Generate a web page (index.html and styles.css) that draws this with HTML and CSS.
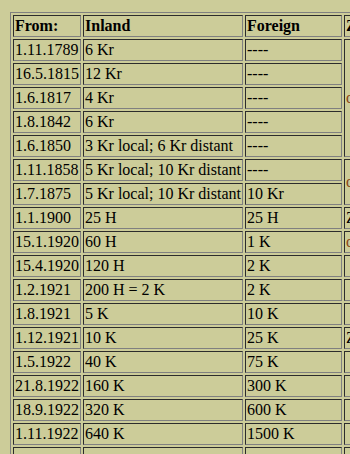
FILE: index.html
```html
<!DOCTYPE html>
<html>
<head>
<meta charset="utf-8">
<title>Letter rates</title>
<link rel="stylesheet" href="styles.css">
</head>
<body>
<table class="rates">
  <tr><th>From:</th><th>Inland</th><th class="c3">Foreign</th><th class="c4">Zone</th></tr>
  <tr><td>1.11.1789</td><td>6 Kr</td><td>----</td><td rowspan="5" class="c4"><span class="mark">o</span></td></tr>
  <tr><td>16.5.1815</td><td>12 Kr</td><td>----</td></tr>
  <tr><td>1.6.1817</td><td>4 Kr</td><td>----</td></tr>
  <tr><td>1.8.1842</td><td>6 Kr</td><td>----</td></tr>
  <tr><td>1.6.1850</td><td>3 Kr local; 6 Kr distant</td><td>----</td></tr>
  <tr><td>1.11.1858</td><td>5 Kr local; 10 Kr distant</td><td>----</td><td rowspan="2" class="c4"><span class="mark">o</span></td></tr>
  <tr><td>1.7.1875</td><td>5 Kr local; 10 Kr distant</td><td>10 Kr</td></tr>
  <tr><td>1.1.1900</td><td>25 H</td><td>25 H</td><td class="c4">Z</td></tr>
  <tr><td>15.1.1920</td><td>60 H</td><td>1 K</td><td class="c4"><span class="mark">o</span></td></tr>
  <tr><td>15.4.1920</td><td>120 H</td><td>2 K</td><td class="c4">&nbsp;</td></tr>
  <tr><td>1.2.1921</td><td>200 H = 2 K</td><td>2 K</td><td class="c4">&nbsp;</td></tr>
  <tr><td>1.8.1921</td><td>5 K</td><td>10 K</td><td class="c4">&nbsp;</td></tr>
  <tr><td>1.12.1921</td><td>10 K</td><td>25 K</td><td class="c4">Z</td></tr>
  <tr><td>1.5.1922</td><td>40 K</td><td>75 K</td><td class="c4">&nbsp;</td></tr>
  <tr><td>21.8.1922</td><td>160 K</td><td>300 K</td><td class="c4">&nbsp;</td></tr>
  <tr><td>18.9.1922</td><td>320 K</td><td>600 K</td><td class="c4">&nbsp;</td></tr>
  <tr><td>1.11.1922</td><td>640 K</td><td>1500 K</td><td class="c4">&nbsp;</td></tr>
  <tr><td>&nbsp;</td><td>&nbsp;</td><td>&nbsp;</td><td class="c4">&nbsp;</td></tr>
</table>
</body>
</html>
```

FILE: styles.css
```css
html, body {
  overflow: hidden;
}
body {
  margin: 12px 0 0 10px;
  background: #cccc99;
  color: #000;
  font-family: "Liberation Serif", "Times New Roman", serif;
  font-size: 16px;
}
.rates {
  width: max-content;
  border: 1px outset grey;
  border-spacing: 2px;
  white-space: nowrap;
}
.rates th,
.rates td {
  border: 1px inset grey;
  padding: 1px;
  text-align: left;
  vertical-align: middle;
}
.rates th {
  font-weight: bold;
}
.rates .c3 {
  width: 93px;
}
.rates .c4 {
  width: 160px;
}
.mark {
  color: #8b4513;
}
```
